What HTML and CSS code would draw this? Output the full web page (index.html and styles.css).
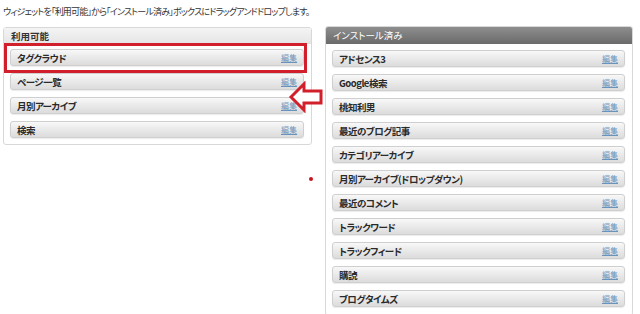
FILE: index.html
```html
<!DOCTYPE html>
<html lang="ja">
<head>
<meta charset="utf-8">
<link rel="stylesheet" href="styles.css">
</head>
<body>
<p class="intro">ウィジェットを「利用可能」から「インストール済み」ボックスにドラッグアンドドロップします。</p>
<div class="columns">
  <section class="panel panel-left">
    <h2 class="panel-head">利用可能</h2>
    <div class="rows">
      <div class="row row-first"><span class="name">タグクラウド</span><a class="edit" href="#">編集</a></div>
      <div class="row"><span class="name">ページ一覧</span><a class="edit" href="#">編集</a></div>
      <div class="row"><span class="name">月別アーカイブ</span><a class="edit" href="#">編集</a></div>
      <div class="row"><span class="name">検索</span><a class="edit" href="#">編集</a></div>
    </div>
  </section>
  <section class="panel panel-right">
    <h2 class="panel-head dark">インストール済み</h2>
    <div class="rows">
      <div class="row"><span class="name">アドセンス3</span><a class="edit" href="#">編集</a></div>
      <div class="row"><span class="name">Google検索</span><a class="edit" href="#">編集</a></div>
      <div class="row"><span class="name">桃知利男</span><a class="edit" href="#">編集</a></div>
      <div class="row"><span class="name">最近のブログ記事</span><a class="edit" href="#">編集</a></div>
      <div class="row"><span class="name">カテゴリアーカイブ</span><a class="edit" href="#">編集</a></div>
      <div class="row"><span class="name">月別アーカイブ(ドロップダウン)</span><a class="edit" href="#">編集</a></div>
      <div class="row"><span class="name">最近のコメント</span><a class="edit" href="#">編集</a></div>
      <div class="row"><span class="name">トラックワード</span><a class="edit" href="#">編集</a></div>
      <div class="row"><span class="name">トラックフィード</span><a class="edit" href="#">編集</a></div>
      <div class="row"><span class="name">購読</span><a class="edit" href="#">編集</a></div>
      <div class="row"><span class="name">ブログタイムズ</span><a class="edit" href="#">編集</a></div>
    </div>
  </section>
</div>
<div class="highlight"></div>
<svg class="arrow" width="38" height="32" viewBox="0 0 38 32">
  <path d="M4 16 L17 3 L17 10 L34 10 L34 22 L17 22 L17 29 Z" fill="#fff" stroke="#d1202c" stroke-width="3" stroke-linejoin="miter"/>
</svg>
<span class="dot"></span>
</body>
</html>
```

FILE: styles.css
```css
* { box-sizing: border-box; }
html, body { margin: 0; padding: 0; background: #fff; }
body {
  width: 640px;
  height: 314px;
  overflow: hidden;
  position: relative;
  font-family: "Noto Sans CJK JP", "Noto Sans", sans-serif;
  font-feature-settings: "palt";
  color: #222;
}
.intro {
  margin: 0;
  padding: 5px 0 0 3px;
  height: 26px;
  font-size: 9px;
  line-height: 14px;
  color: #333;
  letter-spacing: -0.8px;
}
.columns {
  display: flex;
  align-items: flex-start;
  padding-left: 3px;
  gap: 13px;
}
.panel {
  border: 1px solid #d8d8d8;
  border-radius: 3px;
  background: #fff;
}
.panel-left { width: 309px; margin-top: 1px; padding-bottom: 6px; }
.panel-right { width: 308px; padding-bottom: 8px; }
.panel-head {
  margin: 0;
  height: 16px;
  padding-left: 7px;
  font-size: 9.5px;
  line-height: 16px;
  font-weight: bold;
  color: #333;
  background: linear-gradient(#f4f4f4, #e6e6e6);
  border-bottom: 1px solid #e0e0e0;
}
.panel-head.dark {
  height: 17px;
  line-height: 17px;
  color: #fff;
  font-weight: normal;
  background: linear-gradient(#8e8e8e, #6a6a6a);
  border-bottom: none;
  border-radius: 2px 2px 0 0;
}
.rows {
  display: flex;
  flex-direction: column;
  gap: 7px;
  padding: 6px 7px 0 6px;
}
.panel-left .rows { padding: 5px 7px 0 6px; }
.panel-left .row-first { margin-bottom: 0; }
.row {
  height: 17px;
  display: flex;
  align-items: center;
  justify-content: space-between;
  padding: 0 6px 0 6px;
  border: 1px solid #cfcfcf;
  border-radius: 3px;
  background: linear-gradient(#f8f8f8, #e8e8e8 55%, #dcdcdc);
  box-shadow: 0 1px 1px rgba(0,0,0,0.08);
}
.name {
  font-size: 9.5px;
  font-weight: bold;
  color: #2a2a2a;
  white-space: nowrap;
  letter-spacing: -0.5px;
}
.edit {
  font-size: 8px;
  color: #6a93bb;
  text-decoration: underline;
}
.highlight {
  position: absolute;
  left: 4px;
  top: 43px;
  width: 303px;
  height: 30px;
  border: 3px solid #d1202c;
}
.arrow {
  position: absolute;
  left: 287px;
  top: 81px;
}
.dot {
  position: absolute;
  left: 309px;
  top: 177px;
  width: 4px;
  height: 4px;
  border-radius: 50%;
  background: #c8141e;
}
```
